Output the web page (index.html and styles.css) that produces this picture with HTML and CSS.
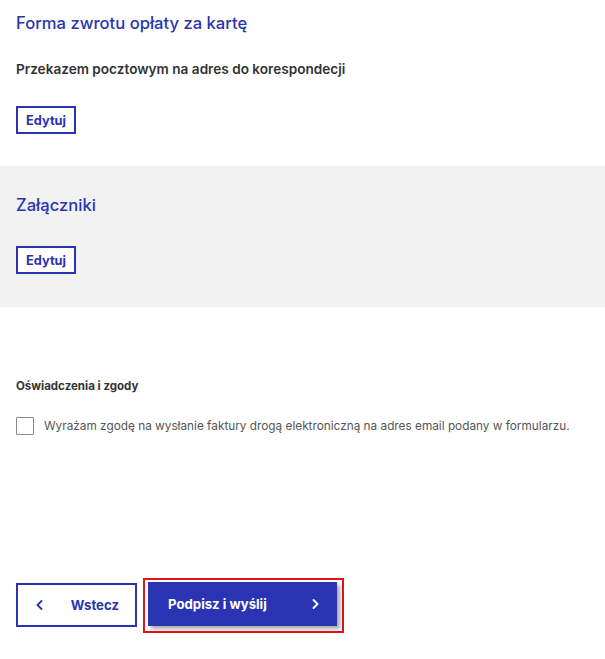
FILE: index.html
```html
<!DOCTYPE html>
<html lang="pl">
<head>
<meta charset="utf-8">
<title>Formularz</title>
<link rel="stylesheet" href="styles.css">
</head>
<body>
<section class="block block-first">
  <h2 class="title">Forma zwrotu opłaty za kartę</h2>
  <p class="value">Przekazem pocztowym na adres do korespondecji</p>
  <button class="btn-edit" type="button">Edytuj</button>
</section>
<section class="block block-grey">
  <h2 class="title">Załączniki</h2>
  <button class="btn-edit" type="button">Edytuj</button>
</section>
<section class="block consents">
  <h3 class="consents-title">Oświadczenia i zgody</h3>
  <label class="check-row">
    <span class="checkbox"></span>
    <span class="check-text">Wyrażam zgodę na wysłanie faktury drogą elektroniczną na adres email podany w formularzu.</span>
  </label>
</section>
<nav class="actions">
  <button class="btn-back" type="button">
    <svg class="chev" width="7" height="10" viewBox="0 0 7 10"><polyline points="5.5,1 1.5,5 5.5,9" fill="none" stroke="currentColor" stroke-width="1.8" stroke-linecap="round" stroke-linejoin="round"/></svg>
    <span>Wstecz</span>
  </button>
  <div class="highlight">
    <button class="btn-primary" type="button">
      <span>Podpisz i wyślij</span>
      <svg class="chev" width="7" height="10" viewBox="0 0 7 10"><polyline points="1.5,1 5.5,5 1.5,9" fill="none" stroke="currentColor" stroke-width="1.8" stroke-linecap="round" stroke-linejoin="round"/></svg>
    </button>
  </div>
</nav>
</body>
</html>
```
FILE: styles.css
```css
* { box-sizing: border-box; }
body {
  margin: 0;
  background: #fff;
  font-family: Inter, "Open Sans", sans-serif;
  color: #333;
}
.block { padding: 0 16px; }
.block-first { padding-top: 11px; padding-bottom: 32px; }
.title {
  margin: 0;
  font-size: 16.6px;
  line-height: 24px;
  font-weight: 500;
  color: #2a34b3;
}
.value {
  margin: 24px 0 27px;
  font-size: 13.6px;
  line-height: 20px;
  font-weight: 600;
  color: #333;
}
.btn-edit {
  display: block;
  width: 60px;
  height: 28px;
  padding: 0;
  border: 2px solid #2a34b3;
  background: #fff;
  color: #2a34b3;
  font-family: inherit;
  font-size: 12.8px;
  font-weight: 700;
}
.block-grey {
  background: #f2f2f2;
  padding-top: 27px;
  padding-bottom: 33px;
}
.block-grey .btn-edit { margin-top: 29px; }
.consents { padding-top: 71px; }
.consents-title {
  margin: 0;
  font-size: 11.5px;
  line-height: 16px;
  font-weight: 700;
  color: #333;
}
.check-row {
  display: flex;
  align-items: center;
  gap: 10px;
  margin-top: 23px;
}
.checkbox {
  flex: none;
  width: 18px;
  height: 18px;
  border: 1px solid #8a8a8a;
  border-radius: 1px;
  background: #fff;
}
.check-text {
  font-size: 11.8px;
  line-height: 16px;
  color: #555;
}
.actions {
  display: flex;
  align-items: flex-start;
  padding: 143px 16px 0;
}
.btn-back, .btn-primary {
  display: flex;
  align-items: center;
  height: 44px;
  font-family: inherit;
  font-size: 13.2px;
  font-weight: 700;
}
.btn-back {
  width: 121px;
  margin-top: 5px;
  margin-right: 6px;
  padding: 0 16px 0 18px;
  justify-content: space-between;
  border: 2px solid #2a34b3;
  background: #fff;
  color: #2a34b3;
}
.highlight {
  border: 2px solid #e3131b;
  padding: 2px 5px 5px 3px;
}
.btn-primary {
  width: 189px;
  padding: 0 18px 0 20px;
  justify-content: space-between;
  border: none;
  background: #2a34b3;
  color: #fff;
  box-shadow: 3px 3px 4px rgba(0,0,0,0.35);
}
.chev { display: block; }
```
